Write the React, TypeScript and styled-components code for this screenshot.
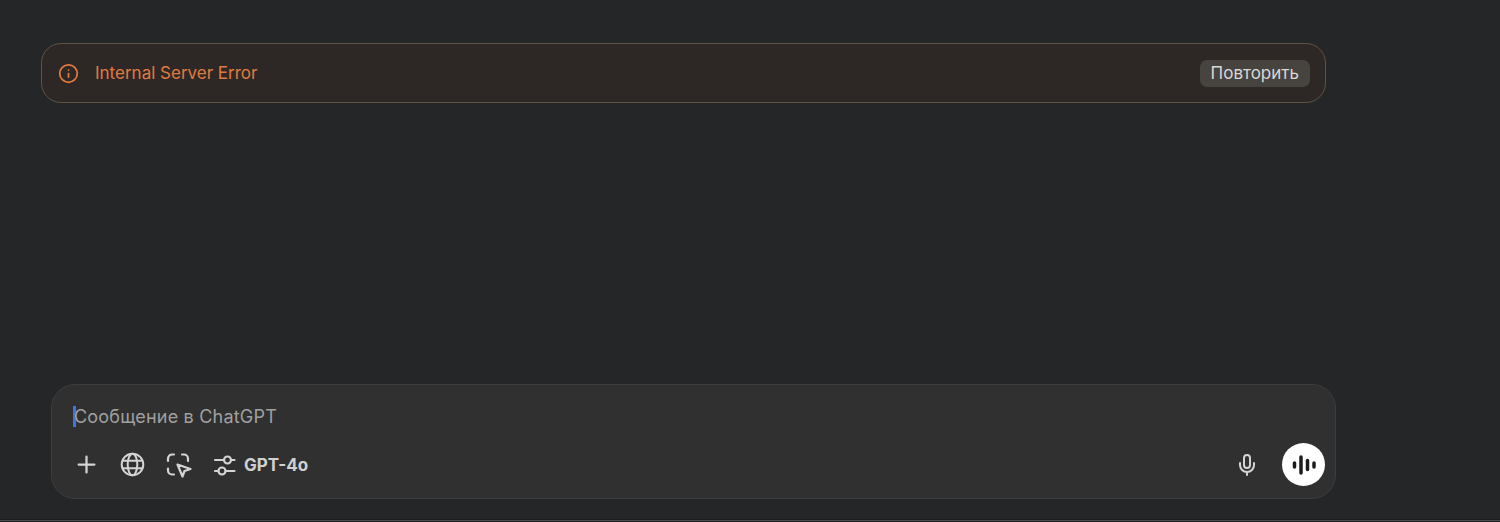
import React from "react";
import styled, { createGlobalStyle } from "styled-components";
import { Info, Mic, Plus } from "lucide-react";

const GlobalStyle = createGlobalStyle`
  html, body {
    margin: 0;
    padding: 0;
    background: #252628;
    overflow: hidden;
  }
`;

const Page = styled.div`
  width: 1500px;
  height: 522px;
  display: flex;
  flex-direction: column;
  background: #252628;
  font-family: Inter, "Liberation Sans", sans-serif;
`;

const Content = styled.div`
  flex: 1;
  display: flex;
  flex-direction: column;
  padding: 43px 0 0 41px;
`;

const BottomEdge = styled.div`
  height: 1px;
  border-top: 1px solid #1b1c1d;
  border-bottom: 1px solid #1b1c1d;
  background: #4c4d4e;
`;

const ErrorBanner = styled.div`
  width: 1285px;
  height: 60px;
  box-sizing: border-box;
  display: flex;
  align-items: center;
  gap: 16px;
  padding: 0 15px 0 16px;
  border: 1px solid #5f5341;
  border-radius: 20px;
  background: #2d2826;
  color: #e07b40;
  font-size: 17px;
`;

const ErrorText = styled.span`
  flex: 1;
`;

const RetryButton = styled.button`
  height: 27px;
  padding: 0 11px;
  border: 0;
  border-radius: 7px;
  background: #47433f;
  color: #d9d8d6;
  font: inherit;
  font-size: 17px;
`;

const Composer = styled.div`
  width: 1285px;
  height: 115px;
  box-sizing: border-box;
  margin: auto 0 20px 10px;
  display: flex;
  flex-direction: column;
  justify-content: space-between;
  padding: 19px 10px 12px 21px;
  border: 1px solid #3c3d3f;
  border-radius: 24px;
  background: #303030;
`;

const Placeholder = styled.div`
  display: flex;
  align-items: center;
  height: 24px;
  color: #a0a0a0;
  font-size: 18px;
  letter-spacing: 0.2px;
`;

const Caret = styled.span`
  width: 2.5px;
  height: 21px;
  margin-right: -1.5px;
  background: #3f74e6;
`;

const Toolbar = styled.div`
  display: flex;
  align-items: center;
  height: 43px;
`;

const ToolIcon = styled.span<{ $gap: number }>`
  display: flex;
  margin-right: ${(p) => p.$gap}px;
  color: #d4d4d4;
`;

const ModelLabel = styled.span`
  margin-left: 8px;
  flex: 1;
  color: #d0d0d0;
  font-size: 17px;
  font-weight: 700;
`;

const VoiceButton = styled.span`
  width: 43px;
  height: 43px;
  margin-left: 23px;
  display: flex;
  align-items: center;
  justify-content: center;
  border-radius: 50%;
  background: #fff;
`;

const App = () => (
  <Page>
    <GlobalStyle />
    <Content>
      <ErrorBanner>
        <Info size={21} strokeWidth={2} />
        <ErrorText>Internal Server Error</ErrorText>
        <RetryButton>Повторить</RetryButton>
      </ErrorBanner>
      <Composer>
        <Placeholder>
          <Caret />
          Сообщение в ChatGPT
        </Placeholder>
        <Toolbar>
          <ToolIcon $gap={20}>
            <Plus size={27} strokeWidth={2} />
          </ToolIcon>
          <ToolIcon $gap={21}>
            <svg width="25" height="25" viewBox="0 0 25 25" fill="none" stroke="currentColor" strokeWidth="2">
              <circle cx="12.5" cy="12.5" r="10.8" />
              <ellipse cx="12.5" cy="12.5" rx="4.8" ry="10.8" />
              <path d="M2.5 8.8h20M2.5 16.2h20" />
            </svg>
          </ToolIcon>
          <ToolIcon $gap={21}>
            <svg width="26" height="26" viewBox="0 0 26 26" fill="none" stroke="currentColor" strokeWidth="2.2" strokeLinecap="round" strokeLinejoin="round">
              <path d="M2 9V6.500A4 4 0 0 1 6 2.500H8" />
              <path d="M16 2.500h2A4 4 0 0 1 22 6.500V9" />
              <path d="M2 16.500v2A4 4 0 0 0 6 22.500H8" />
              <path d="M11.500 12.500L24.500 17l-6 2-2 5.500z" />
            </svg>
          </ToolIcon>
          <ToolIcon $gap={0}>
            <svg width="23" height="24" viewBox="0 0 23 24" fill="none" stroke="currentColor" strokeWidth="2.2" strokeLinecap="round">
              <path d="M2 7h8M18.500 7h3" />
              <circle cx="14.500" cy="7" r="3.500" />
              <path d="M2 18h3M13 18h8.500" />
              <circle cx="9" cy="18" r="3.500" />
            </svg>
          </ToolIcon>
          <ModelLabel>GPT-4o</ModelLabel>
          <ToolIcon $gap={0}>
            <Mic size={24} strokeWidth={2} />
          </ToolIcon>
          <VoiceButton>
            <svg width="26" height="24" viewBox="0 0 26 24" fill="none" stroke="#1c1c1c" strokeLinecap="round" strokeWidth="3.500">
              <path d="M3.500 10v4" />
              <path d="M10 4v16" />
              <path d="M16.500 7.500v9" />
              <path d="M23 10v4" />
            </svg>
          </VoiceButton>
        </Toolbar>
      </Composer>
    </Content>
    <BottomEdge />
  </Page>
);

export default App;
